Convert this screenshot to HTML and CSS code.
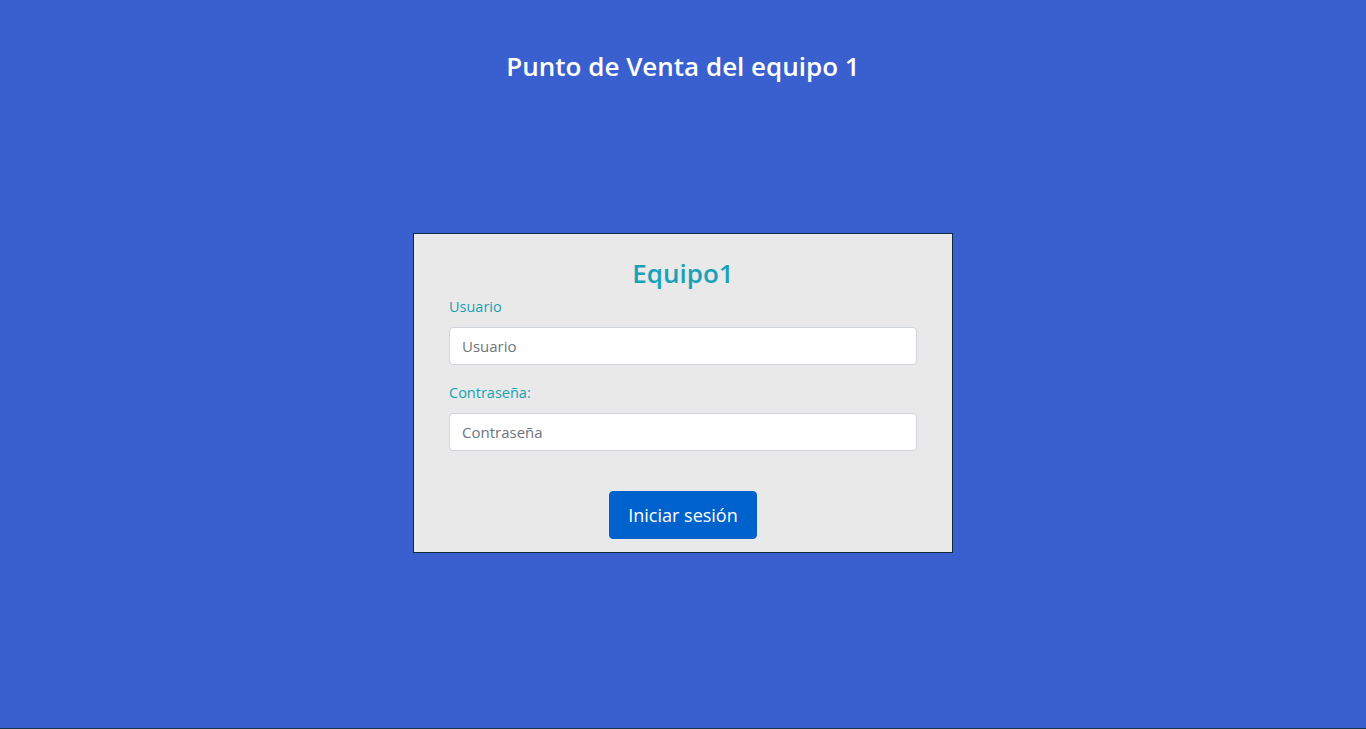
FILE: index.html
```html
<!DOCTYPE html>
<html lang="es">
<head>
<meta charset="utf-8">
<title>Punto de Venta</title>
<link rel="stylesheet" href="styles.css">
</head>
<body>
<div class="page">
  <h1 class="site-title">Punto de Venta del equipo 1</h1>
  <form class="login-card">
    <h2 class="card-title">Equipo1</h2>
    <div class="field">
      <label class="field-label" for="u">Usuario</label>
      <input class="field-input" id="u" type="text" placeholder="Usuario">
    </div>
    <div class="field">
      <label class="field-label" for="p">Contraseña:</label>
      <input class="field-input" id="p" type="password" placeholder="Contraseña">
    </div>
    <div class="actions">
      <button class="btn-login" type="button">Iniciar sesión</button>
    </div>
  </form>
</div>
</body>
</html>
```

FILE: styles.css
```css
html, body {
  margin: 0;
  padding: 0;
  height: 100%;
}
body {
  background: #3a60d0;
  font-family: "Open Sans", "Noto Sans", sans-serif;
  border-bottom: 1px solid #14384a;
  box-sizing: border-box;
}
.page {
  display: flex;
  flex-direction: column;
  align-items: center;
  padding-top: 47px;
}
.site-title {
  margin: 0;
  color: #ffffff;
  font-size: 26px;
  font-weight: 600;
  line-height: 38px;
}
.login-card {
  margin-top: 148px;
  width: 468px;
  box-sizing: content-box;
  background: #e9e9e9;
  border: 1px solid #0e2a38;
  padding: 20px 35px 13px;
}
.login-card * {
  box-sizing: border-box;
}
.card-title {
  margin: 0;
  text-align: center;
  color: #17a2b8;
  font-size: 26px;
  font-weight: 600;
  line-height: 38px;
}
.field {
  display: flex;
  flex-direction: column;
}
.field + .field {
  margin-top: 13px;
}
.field-label {
  color: #17a2b8;
  font-size: 14.5px;
  line-height: 22px;
  margin-top: 4px;
  margin-bottom: 9px;
}
.field-input {
  width: 100%;
  height: 38px;
  border: 1px solid #ced4da;
  border-radius: 4px;
  background: #fff;
  padding: 6px 12px;
  font-family: inherit;
  font-size: 15px;
  color: #495057;
  outline: none;
}
.field-input::placeholder {
  color: #6c757d;
}
.actions {
  display: flex;
  justify-content: center;
  margin-top: 40px;
}
.btn-login {
  width: 148px;
  height: 48px;
  border: 1px solid #0062cc;
  background: #0062cc;
  color: #fff;
  border-radius: 4px;
  font-family: inherit;
  font-size: 18px;
  cursor: pointer;
}
```
